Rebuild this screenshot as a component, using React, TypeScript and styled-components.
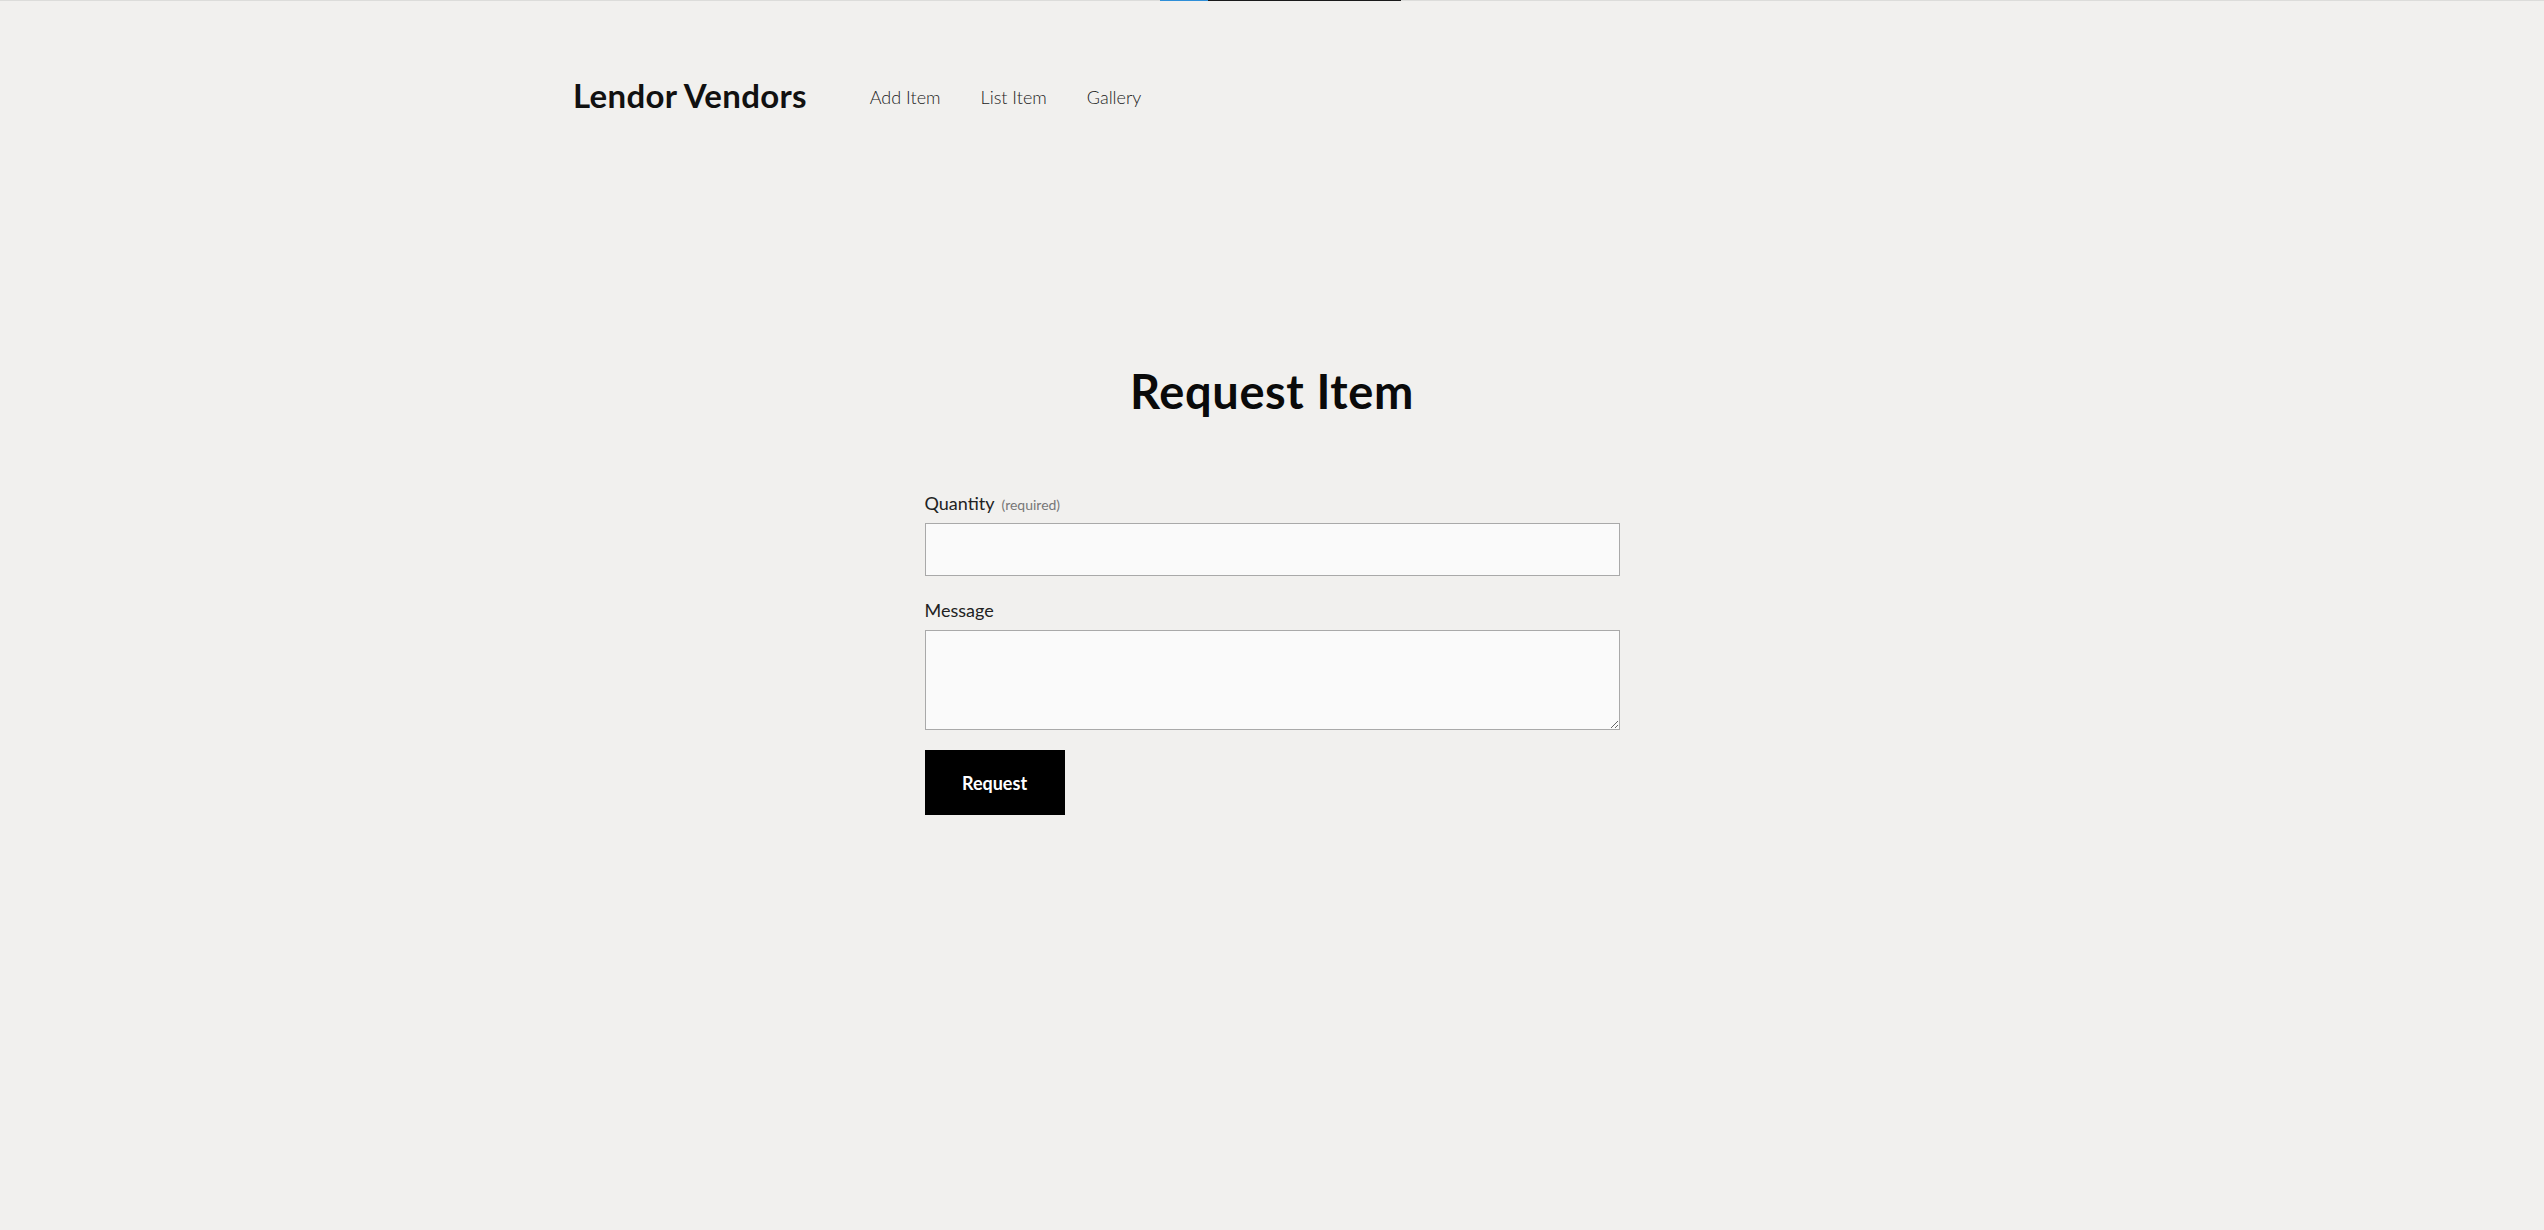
import React from 'react'
import styled, { createGlobalStyle } from 'styled-components'

const GlobalStyle = createGlobalStyle`
  html, body {
    margin: 0;
    padding: 0;
    background: #f1f0ee;
  }
  body {
    font-family: Lato, "Noto Sans", sans-serif;
    color: #111;
  }
`

const Page = styled.div`
  position: relative;
  min-height: 1230px;
  border-top: 1px solid #dcdcda;
  box-sizing: border-box;
`

const LoadBar = styled.div`
  position: absolute;
  top: -1px;
  left: 1160px;
  display: flex;
  height: 1px;
`

const LoadSegment = styled.span<{ $color: string; $width: number }>`
  display: block;
  width: ${({ $width }) => $width}px;
  background: ${({ $color }) => $color};
`

const Header = styled.header`
  width: 1398px;
  margin: 0 auto;
  padding-top: 74px;
  display: flex;
  align-items: center;
`

const Logo = styled.div`
  font-family: Lato, "Noto Sans", sans-serif;
  font-weight: 700;
  font-size: 33px;
  letter-spacing: 0.3px;
  color: #111;
`

const Nav = styled.nav`
  display: flex;
  gap: 40px;
  margin-left: 63px;
  padding-top: 3px;
`

const NavLink = styled.a`
  font-family: Lato, "Noto Sans", sans-serif;
  font-weight: 300;
  font-size: 18px;
  color: #222;
  text-decoration: none;
`

const Main = styled.main`
  width: 695px;
  margin: 0 auto;
  padding-top: 248px;
`

const Title = styled.h1`
  margin: 0 0 73px;
  text-align: center;
  font-family: Lato, "Noto Sans", sans-serif;
  font-weight: 700;
  font-size: 47px;
  letter-spacing: 0.6px;
  color: #0a0a0a;
`

const Form = styled.form`
  display: flex;
  flex-direction: column;
`

const Field = styled.div<{ $space: number }>`
  display: flex;
  flex-direction: column;
  margin-bottom: ${({ $space }) => $space}px;
`

const Label = styled.label`
  font-family: Lato, "Noto Sans", sans-serif;
  font-weight: 400;
  font-size: 18px;
  color: #222;
  margin-bottom: 9px;
  display: flex;
  align-items: baseline;
  gap: 7px;
`

const Hint = styled.span`
  font-size: 14px;
  color: #777;
`

const TextInput = styled.input`
  box-sizing: border-box;
  width: 100%;
  height: 53px;
  border: 1px solid #a9a9a9;
  background: #fafafa;
  border-radius: 0;
  padding: 0 12px;
  font-size: 16px;
  outline: none;
`

const TextArea = styled.textarea`
  box-sizing: border-box;
  width: 100%;
  height: 100px;
  border: 1px solid #a9a9a9;
  background: #fafafa;
  border-radius: 0;
  padding: 12px;
  font-size: 16px;
  outline: none;
  resize: vertical;
`

const SubmitButton = styled.button`
  align-self: flex-start;
  width: 140px;
  height: 65px;
  background: #000;
  color: #fff;
  border: none;
  border-radius: 0;
  font-family: Lato, "Noto Sans", sans-serif;
  font-weight: 700;
  font-size: 18px;
  cursor: pointer;
`

export default function App() {
  return (
    <>
      <GlobalStyle />
      <Page>
        <LoadBar>
          <LoadSegment $color="#2f8fd8" $width={48} />
          <LoadSegment $color="#1a1a1a" $width={193} />
        </LoadBar>
        <Header>
          <Logo>Lendor Vendors</Logo>
          <Nav>
            <NavLink href="#">Add Item</NavLink>
            <NavLink href="#">List Item</NavLink>
            <NavLink href="#">Gallery</NavLink>
          </Nav>
        </Header>
        <Main>
          <Title>Request Item</Title>
          <Form onSubmit={(e) => e.preventDefault()}>
            <Field $space={23}>
              <Label htmlFor="qty">
                Quantity <Hint>(required)</Hint>
              </Label>
              <TextInput id="qty" type="text" />
            </Field>
            <Field $space={20}>
              <Label htmlFor="msg">Message</Label>
              <TextArea id="msg" />
            </Field>
            <SubmitButton type="submit">Request</SubmitButton>
          </Form>
        </Main>
      </Page>
    </>
  )
}
